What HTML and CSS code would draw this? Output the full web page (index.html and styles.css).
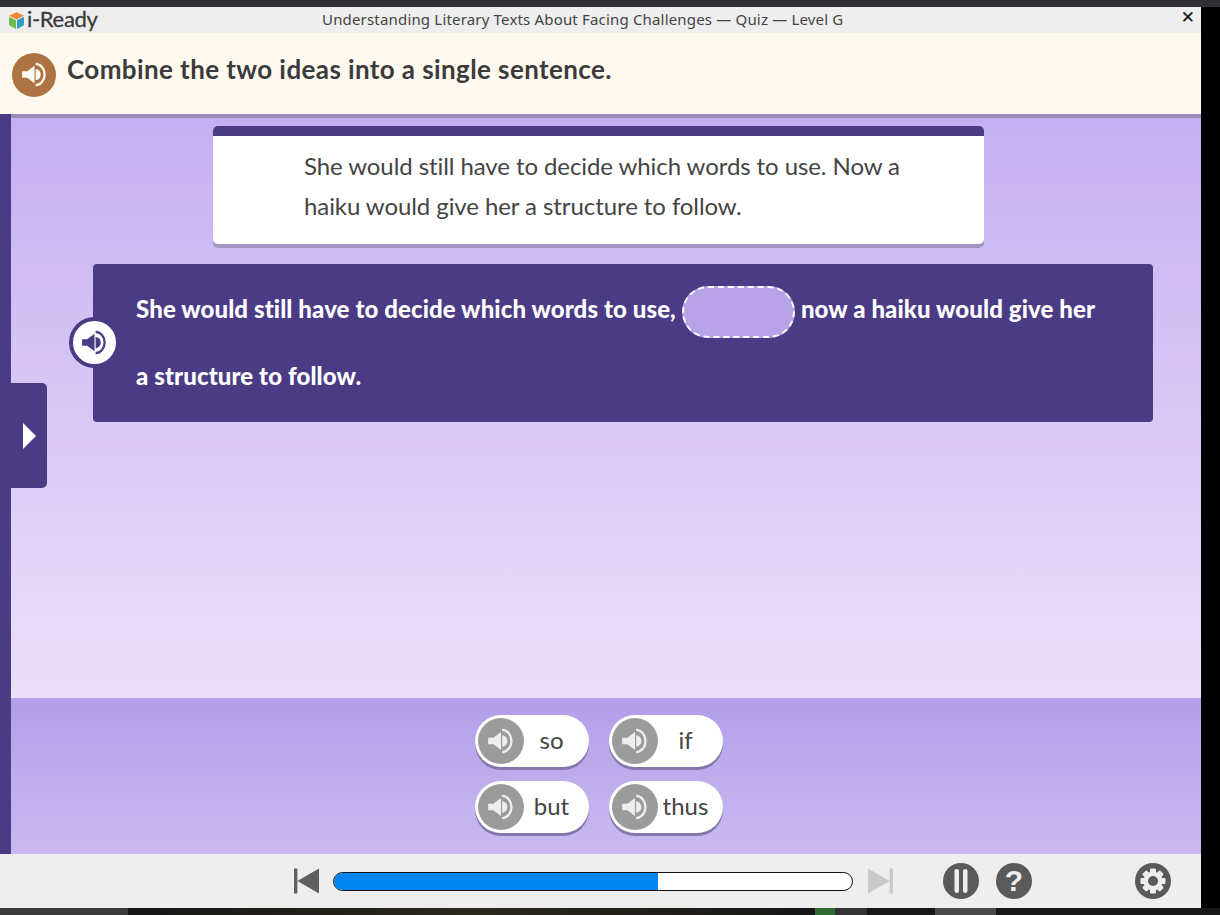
FILE: index.html
```html
<!DOCTYPE html>
<html lang="en">
<head>
<meta charset="utf-8">
<title>i-Ready Quiz</title>
<link rel="stylesheet" href="styles.css">
</head>
<body>
<svg class="defs" width="0" height="0" aria-hidden="true">
  <symbol id="spk" viewBox="0 0 24 24">
    <path d="M1 9.200h4.500L12 4.200v15.600l-6.500-5H1z"/>
    <path d="M13 7a4.500 5 0 0 1 0 10z"/>
    <path d="M13 2.500a8 9.500 0 0 1 0 19" fill="none" stroke="currentColor" stroke-width="2"/>
  </symbol>
</svg>
<div class="topstrip"></div>
<div class="window">
  <div class="app">
    <header class="titlebar">
      <div class="logo">
        <svg class="cube" viewBox="0 0 16 16"><path d="M8 0l7 3.500L8 7 1 3.500z" fill="#ee8a3c"/><path d="M1 4.500l6.500 3.200V16L1 12.500z" fill="#6cbb4a"/><path d="M15 4.500L8.500 7.700V16L15 12.500z" fill="#2f9fc4"/></svg>
        <span class="logotext">i-Ready</span>
      </div>
      <div class="title">Understanding Literary Texts About Facing Challenges — Quiz — Level G</div>
      <div class="close">✕</div>
    </header>
    <section class="prompt">
      <div class="promptspk"><svg class="ico"><use href="#spk"/></svg></div>
      <h1>Combine the two ideas into a single sentence.</h1>
    </section>
    <main class="stage">
      <div class="rail"></div>
      <div class="tab"><span class="tri"></span></div>
      <div class="content">
        <div class="passage">
          <p>She would still have to decide which words to use. Now a haiku would give her a structure to follow.</p>
        </div>
        <div class="sentence">
          <div class="sentspk"><svg class="ico"><use href="#spk"/></svg></div>
          <p>She would still have to decide which words to use,<span class="blank"></span>now a haiku would give her a structure to follow.</p>
        </div>
      </div>
    </main>
    <section class="tray">
      <div class="rail"></div>
      <div class="choices">
        <div class="choice"><span class="cspk"><svg class="ico"><use href="#spk"/></svg></span><span class="word">so</span></div>
        <div class="choice"><span class="cspk"><svg class="ico"><use href="#spk"/></svg></span><span class="word">if</span></div>
        <div class="choice"><span class="cspk"><svg class="ico"><use href="#spk"/></svg></span><span class="word">but</span></div>
        <div class="choice"><span class="cspk"><svg class="ico"><use href="#spk"/></svg></span><span class="word">thus</span></div>
      </div>
    </section>
    <footer class="controls">
      <svg class="skip" viewBox="0 0 26 28"><path d="M0 1h3.500v26H0zM3.500 14L26 1v26z" fill="#5f5f5f"/></svg>
      <div class="progress"><div class="fill" style="width:62.500%"></div></div>
      <svg class="skip next" viewBox="0 0 26 28"><path d="M26 1h-3.500v26H26zM22.500 14L0 1v26z" fill="#c9c9c9"/></svg>
      <svg class="round pause" viewBox="0 0 36 36"><circle cx="18" cy="18" r="18" fill="#5a5a5a"/><rect x="11.500" y="6" width="4.500" height="24" rx="2.200" fill="#eee"/><rect x="20" y="6" width="4.500" height="24" rx="2.200" fill="#eee"/></svg>
      <div class="round help">?</div>
      <svg class="round gear" viewBox="0 0 36 36"><circle cx="18" cy="18" r="18" fill="#5a5a5a"/><g fill="#eee"><circle cx="18" cy="18" r="9.500"/><rect x="15" y="5.500" width="6" height="25" rx="1.200"/><rect x="15" y="5.500" width="6" height="25" rx="1.200" transform="rotate(45 18 18)"/><rect x="15" y="5.500" width="6" height="25" rx="1.200" transform="rotate(90 18 18)"/><rect x="15" y="5.500" width="6" height="25" rx="1.200" transform="rotate(135 18 18)"/></g><circle cx="18" cy="18" r="5" fill="#5a5a5a"/></svg>
    </footer>
  </div>
  <div class="blackside"></div>
</div>
<div class="taskbar">
  <span class="seg s1"></span><span class="seg s2"></span><span class="seg s3"></span><span class="seg s4"></span><span class="seg s5"></span><span class="seg s6"></span><span class="seg s7"></span>
</div>
</body>
</html>
```
FILE: styles.css
```css
* { box-sizing: border-box; }
html, body { margin: 0; height: 915px; overflow: hidden; background: #000; }
body { font-family: "Noto Sans", sans-serif; color: #3c3c3c; display: flex; flex-direction: column; }
.defs { position: absolute; }
.topstrip { height: 7px; background: #2e2e34; flex: none; }
.window { flex: none; height: 901px; display: flex; }
.app { width: 1201px; display: flex; flex-direction: column; flex: none; }
.blackside { flex: 1; background: #000; }

.titlebar { height: 26px; background: #eeeeee; display: flex; align-items: center; flex: none; position: relative; }
.logo { display: flex; align-items: center; padding-left: 8px; width: 322px; flex: none; }
.cube { width: 17px; height: 17px; flex: none; }
.logotext { font-family: "Lato", sans-serif; font-size: 22px; color: #3a3a3a; margin: -2px 0 0 2px; letter-spacing: -0.3px; line-height: 26px; -webkit-text-stroke: 0.3px #3a3a3a; }
.title { font-size: 15px; color: #444; letter-spacing: 0.175px; white-space: nowrap; line-height: 26px; margin-top: -2px; }
.close { position: absolute; right: 6px; top: 1px; font-size: 17px; font-weight: 700; color: #111; line-height: 18px; font-family: "DejaVu Sans", sans-serif; }

.prompt { height: 81px; background: #fffaf0; display: flex; align-items: center; padding-left: 12px; flex: none; }
.promptspk { width: 44px; height: 44px; border-radius: 50%; background: #ad7342; color: #fffaf0; display: flex; align-items: center; justify-content: center; fill: #fffaf0; flex: none; margin-top: 2px; }
.promptspk .ico { width: 27px; height: 27px; }
.prompt h1 { margin: 0 0 10px 11px; font-family: "Lato", sans-serif; font-weight: 700; font-size: 26px; color: #3b3b3b; letter-spacing: 0.4px; white-space: nowrap; }
.ico { display: block; }

.stage { height: 584px; flex: none; display: flex; position: relative; background: linear-gradient(#9c8ab8 4px, transparent 4px), linear-gradient(#c4b0f1, #ecdff9); }
.rail { width: 11px; background: #4b3b85; flex: none; }
.tab { position: absolute; left: 11px; top: 269px; width: 36px; height: 105px; background: #4b3b85; border-radius: 0 5px 5px 0; display: flex; align-items: center; justify-content: center; }
.tri { width: 0; height: 0; border-left: 13px solid #fff; border-top: 13px solid transparent; border-bottom: 13px solid transparent; }
.content { flex: 1; display: flex; flex-direction: column; align-items: flex-start; padding-top: 12px; }

.passage { margin-left: 202px; width: 771px; height: 118px; background: #fff; border-top: 10px solid #4b3b85; border-radius: 5px; box-shadow: 0 4px 0 #a394c4; }
.passage p { margin: 0; padding: 10px 70px 0 91px; font-family: "Lato", sans-serif; font-size: 24px; line-height: 40px; color: #444; letter-spacing: -0.08px; }

.sentence { position: relative; margin: 20px 0 0 82px; width: 1060px; height: 158px; background: #4b3b85; border-radius: 4px; padding: 11px 46px 0 43px; }
.sentence p { margin: 0; font-family: "Lato", sans-serif; font-weight: 900; font-size: 24px; line-height: 67px; color: #fff; letter-spacing: 0.1px; }
.blank { display: inline-block; width: 113px; height: 52px; margin: 0 6px; vertical-align: middle; background: #b9a3e8; border: 2px dashed #fff; border-radius: 26px; }
.sentspk { position: absolute; left: -24px; top: 53px; width: 51px; height: 51px; border-radius: 50%; background: #fff; border: 4px solid #4b3b85; color: #4b3b85; fill: #4b3b85; display: flex; align-items: center; justify-content: center; }
.sentspk .ico { width: 27px; height: 27px; }

.tray { height: 156px; flex: none; display: flex; background: linear-gradient(#b29ee9, #cabaf0); }
.choices { margin: 17px 0 0 464px; display: grid; grid-template-columns: 114px 114px; grid-auto-rows: 52px; column-gap: 20px; row-gap: 14px; align-content: start; }
.choice { background: #fff; border-radius: 26px; box-shadow: 0 3px 0 #8476a8; display: flex; align-items: center; padding-left: 3px; }
.cspk { width: 46px; height: 46px; border-radius: 50%; background: #9b9b9b; color: #eee; fill: #eee; display: flex; align-items: center; justify-content: center; flex: none; }
.cspk .ico { width: 28px; height: 28px; }
.word { flex: 1; text-align: center; font-family: "Lato", sans-serif; font-size: 24px; color: #444; padding: 0 10px 4px 0; }

.controls { height: 54px; flex: none; background: #eeeeee; display: flex; align-items: center; padding-left: 294px; }
.skip { width: 25px; height: 28px; flex: none; }
.progress { width: 520px; height: 19px; margin-left: 14px; border: 1.5px solid #111; border-radius: 10px; background: #fff; overflow: hidden; flex: none; }
.fill { height: 100%; background: #0084f0; }
.next { margin-left: 15px; }
.round { width: 36px; height: 36px; flex: none; }
.pause { margin-left: 50px; }
.help { margin-left: 17px; border-radius: 50%; background: #5a5a5a; color: #eee; font-family: "Liberation Sans", sans-serif; font-weight: 700; font-size: 30px; line-height: 36px; text-align: center; }
.gear { margin-left: 103px; }

.taskbar { flex: 1; display: flex; background: #161616; }
.seg { display: block; height: 100%; }
.s1 { width: 128px; background: #3a3a3a; }
.s2 { width: 687px; background: linear-gradient(90deg, #161616, #2b281f 50%, #161616); }
.s3 { width: 20px; background: #2f6b33; }
.s4 { width: 32px; background: #333; }
.s5 { width: 68px; background: #181818; }
.s6 { width: 61px; background: #4a4a4a; }
.s7 { flex: 1; background: #181818; }
```
